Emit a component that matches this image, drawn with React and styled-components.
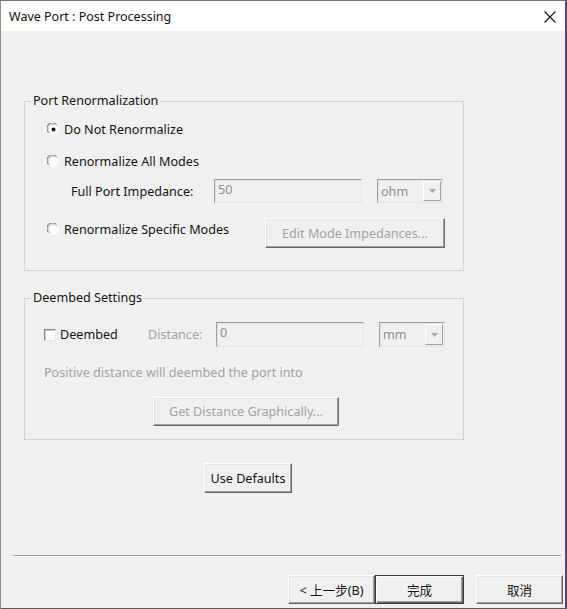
import React from 'react';
import styled, { createGlobalStyle, css } from 'styled-components';

const App = () => {
  return (
    <>
      <GlobalStyle />
      <Window>
        <TitleBar>
          <Title>Wave Port : Post Processing</Title>
          <CloseIcon width="12" height="12" viewBox="0 0 12 12">
            <path d="M0.5 0.5 L11.5 11.5 M11.5 0.5 L0.5 11.5" stroke="#111" strokeWidth="1.1" fill="none" />
          </CloseIcon>
        </TitleBar>
        <Body>
          <Group $top={62}>
            <Legend>Port Renormalization</Legend>
            <GroupBody $left={22} $bottom={22}>
              <Row $top={10} $height={20}>
                <Radio checked label="Do Not Renormalize" />
              </Row>
              <Row $top={12} $height={20}>
                <Radio label="Renormalize All Modes" />
              </Row>
              <Row $top={8} $height={24}>
                <FieldLabel $width={143} $indent={24}>Full Port Impedance:</FieldLabel>
                <TextBox $width={148}>50</TextBox>
                <Combo $left={15} $width={66}>
                  <span>ohm</span>
                  <ComboArrow>
                    <svg width="7" height="4" viewBox="0 0 7 4">
                      <path d="M0 0 H7 L3.5 4 Z" fill="#a8a8a8" />
                    </svg>
                  </ComboArrow>
                </Combo>
              </Row>
              <Row $top={15} $height={30} $align="flex-start">
                <RadioSlot $width={218}>
                  <Radio label="Renormalize Specific Modes" />
                </RadioSlot>
                <Button $width={180} $height={30} disabled>Edit Mode Impedances...</Button>
              </Row>
            </GroupBody>
          </Group>

          <Group $top={19}>
            <Legend>Deembed Settings</Legend>
            <GroupBody $left={19} $bottom={13}>
              <Row $top={16} $height={25}>
                <CheckLabel $width={104}>
                  <CheckBox />
                  Deembed
                </CheckLabel>
                <FieldLabel $width={68} $muted>Distance:</FieldLabel>
                <TextBox $width={148}>0</TextBox>
                <Combo $left={15} $width={66}>
                  <span>mm</span>
                  <ComboArrow>
                    <svg width="7" height="4" viewBox="0 0 7 4">
                      <path d="M0 0 H7 L3.5 4 Z" fill="#a8a8a8" />
                    </svg>
                  </ComboArrow>
                </Combo>
              </Row>
              <Note>Positive distance will deembed the port into</Note>
              <Row $top={16} $height={29} $indent={109}>
                <Button $width={186} $height={29} disabled>Get Distance Graphically...</Button>
              </Row>
            </GroupBody>
          </Group>

          <Row $top={23} $height={30} $indent={180}>
            <Button $width={88} $height={30}>Use Defaults</Button>
          </Row>
        </Body>

        <Separator />

        <Footer>
          <Button $width={87} $height={29}>&lt; 上一步(B)</Button>
          <Button $width={89} $height={29} $default>完成</Button>
          <Button $width={87} $height={29} $gap={12}>取消</Button>
        </Footer>
      </Window>
    </>
  );
};

const Radio = ({ checked, label }) => (
  <RadioLabel>
    <svg width="13" height="13" viewBox="0 0 13 13">
      <circle cx="6.5" cy="6.5" r="5.5" fill="#fbfbfb" />
      <path d="M1.6 9.5 A5.5 5.5 0 0 1 9.5 1.6" stroke="#8a8a8a" strokeWidth="1.2" fill="none" />
      <path d="M2.9 10.3 A4.5 4.5 0 0 1 10.3 2.9" stroke="#c8c8c8" strokeWidth="1" fill="none" />
      {checked && <circle cx="6.5" cy="6.5" r="2" fill="#111" />}
    </svg>
    {label}
  </RadioLabel>
);

const GlobalStyle = createGlobalStyle`
  html, body {
    margin: 0;
    padding: 0;
    background: #f0f0f0;
  }
  body {
    font-family: "Noto Sans", "Noto Sans CJK SC", sans-serif;
    font-size: 12.6px;
    color: #141414;
  }
`;

const Window = styled.div`
  width: 567px;
  height: 609px;
  box-sizing: border-box;
  border-top: 1px solid #7a6f80;
  border-left: 1px solid #8c8c8c;
  border-right: 2px solid #5c4470;
  border-bottom: 1px solid #5c5c5c;
  background: #f0f0f0;
  display: flex;
  flex-direction: column;
  overflow: hidden;
`;

const TitleBar = styled.div`
  height: 30px;
  flex-shrink: 0;
  background: #fff;
  display: flex;
  align-items: center;
  justify-content: space-between;
  padding: 0 9px 0 8px;
`;

const Title = styled.span`
  font-size: 12.5px;
  color: #111;
`;

const CloseIcon = styled.svg`
  display: block;
  margin-top: 1px;
`;

const Body = styled.div`
  display: flex;
  flex-direction: column;
  padding-left: 23px;
`;

const Group = styled.fieldset`
  width: 440px;
  box-sizing: border-box;
  margin: ${(p) => p.$top}px 0 0 0;
  padding: 0;
  min-width: 0;
  border: 1px solid #d3d3d3;
`;

const Legend = styled.legend`
  margin-left: 6px;
  padding: 0 2px;
  height: 16px;
  line-height: 16px;
  color: #141414;
`;

const GroupBody = styled.div`
  display: flex;
  flex-direction: column;
  padding: 0 0 ${(p) => p.$bottom}px ${(p) => p.$left}px;
`;

const Row = styled.div`
  display: flex;
  align-items: ${(p) => p.$align || 'center'};
  margin-top: ${(p) => p.$top || 0}px;
  height: ${(p) => p.$height}px;
  padding-left: ${(p) => p.$indent || 0}px;
`;

const RadioLabel = styled.label`
  display: flex;
  align-items: center;
  gap: 4px;
  height: 22px;
  white-space: nowrap;

  svg {
    display: block;
  }
`;

const RadioSlot = styled.div`
  width: ${(p) => p.$width}px;
  flex-shrink: 0;
`;

const CheckLabel = styled.label`
  display: flex;
  align-items: center;
  gap: 4px;
  width: ${(p) => p.$width}px;
  flex-shrink: 0;
`;

const CheckBox = styled.span`
  width: 12px;
  height: 12px;
  box-sizing: border-box;
  background: #fbfbfb;
  border-top: 1px solid #8a8a8a;
  border-left: 1px solid #8a8a8a;
  border-right: 1px solid #e6e6e6;
  border-bottom: 1px solid #e6e6e6;
  box-shadow: inset 1px 1px 0 #c8c8c8;
`;

const FieldLabel = styled.span`
  width: ${(p) => p.$width}px;
  margin-left: ${(p) => p.$indent || 0}px;
  flex-shrink: 0;
  white-space: nowrap;
  color: ${(p) => (p.$muted ? '#a3a3a3' : '#141414')};
`;

const sunken = css`
  box-sizing: border-box;
  height: 100%;
  background: #f0f0f0;
  border-top: 1px solid #a0a0a0;
  border-left: 1px solid #a0a0a0;
  border-right: 1px solid #e3e3e3;
  border-bottom: 1px solid #e3e3e3;
  box-shadow: inset 1px 1px 0 #e3e3e3;
  color: #8f8f8f;
`;

const TextBox = styled.div`
  ${sunken}
  width: ${(p) => p.$width}px;
  padding: 2px 3px;
  line-height: 16px;
`;

const Combo = styled.div`
  ${sunken}
  width: ${(p) => p.$width}px;
  margin-left: ${(p) => p.$left}px;
  display: flex;
  align-items: stretch;
  justify-content: space-between;
  padding: 1px 1px 1px 3px;

  span {
    align-self: center;
  }
`;

const ComboArrow = styled.div`
  width: 16px;
  display: flex;
  align-items: center;
  justify-content: center;
  background: #f0f0f0;
  border-right: 1px solid #a0a0a0;
  border-bottom: 1px solid #a0a0a0;
  border-top: 1px solid #fff;
  border-left: 1px solid #fff;
`;

const Button = styled.button`
  box-sizing: border-box;
  width: ${(p) => p.$width}px;
  height: ${(p) => p.$height}px;
  margin-left: ${(p) => p.$gap || 0}px;
  flex-shrink: 0;
  padding: 0;
  font-family: inherit;
  font-size: 12.6px;
  color: #141414;
  background: #f0f0f0;
  border-top: 1px solid #fff;
  border-left: 1px solid #fff;
  border-right: 1px solid #696969;
  border-bottom: 1px solid #696969;
  box-shadow: inset -1px -1px 0 #a0a0a0, inset 1px 1px 0 #e3e3e3;
  border-radius: 0;

  &:disabled {
    color: #a3a3a3;
  }

  ${(p) =>
    p.$default &&
    css`
      border: 1px solid #3c3c3c;
      box-shadow: inset 1px 1px 0 #fff, inset -1px -1px 0 #696969, inset -2px -2px 0 #a0a0a0;
    `}
`;

const Note = styled.div`
  margin-top: 18px;
  height: 16px;
  line-height: 16px;
  color: #a3a3a3;
  white-space: nowrap;
`;

const Separator = styled.div`
  margin: 62px 4px 0 12px;
  height: 1px;
  background: #a0a0a0;
  border-bottom: 1px solid #fff;
`;

const Footer = styled.div`
  display: flex;
  justify-content: flex-end;
  margin-top: 18px;
  padding-right: 2px;
`;

export default App;
